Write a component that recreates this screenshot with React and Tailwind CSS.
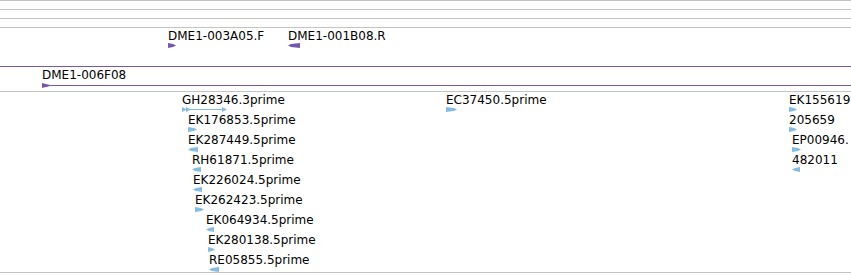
import React from "react";

const PURPLE = "#7558ad";
const BLUE = "#86bce2";

// small strand arrow glyph
function Glyph({ dir = "r", w = 9, h = 5, color }) {
  const pts =
    dir === "r"
      ? `0,0 ${w - 3},1 ${w},${h / 2} ${w - 3},${h - 1} 0,${h}`
      : `${w},0 3,1 0,${h / 2} 3,${h - 1} ${w},${h}`;
  return (
    <svg width={w} height={h} className="block">
      <polygon points={pts} fill={color} />
    </svg>
  );
}

// a feature sits at its genome coordinate within the row
function Feature({ x, label, dir, gw = 9, color = BLUE, children }) {
  return (
    <div className="absolute top-px flex flex-col" style={{ left: x }}>
      <span className="whitespace-nowrap text-[12px] leading-[14px] text-black">{label}</span>
      {children || <Glyph dir={dir} w={gw} color={color} />}
    </div>
  );
}

const estRows = [
  [
    { x: 182, label: "GH28346.3prime", spliced: true },
    { x: 446, label: "EC37450.5prime", dir: "r", gw: 11 },
    { x: 789, label: "EK155619", dir: "r", gw: 8 },
  ],
  [
    { x: 188, label: "EK176853.5prime", dir: "r", gw: 9 },
    { x: 789, label: "205659", dir: "r", gw: 8 },
  ],
  [
    { x: 188, label: "EK287449.5prime", dir: "l", gw: 10 },
    { x: 792, label: "EP00946.", dir: "r", gw: 9 },
  ],
  [
    { x: 192, label: "RH61871.5prime", dir: "l", gw: 9 },
    { x: 792, label: "482011", dir: "l", gw: 8 },
  ],
  [{ x: 193, label: "EK226024.5prime", dir: "l", gw: 9 }],
  [{ x: 195, label: "EK262423.5prime", dir: "r", gw: 9 }],
  [{ x: 206, label: "EK064934.5prime", dir: "l", gw: 8 }],
  [{ x: 208, label: "EK280138.5prime", dir: "r", gw: 7 }],
  [{ x: 209, label: "RE05855.5prime", dir: "l", gw: 10 }],
];

function Spliced() {
  return (
    <svg width="46" height="5" className="block">
      <polygon points="0,0 5,2.5 0,5" fill={BLUE} />
      <polygon points="4,0 9,2.5 4,5" fill={BLUE} />
      <rect x="8" y="2" width="36" height="1" fill={BLUE} />
      <polygon points="40,0 45,2.5 40,5" fill={BLUE} />
    </svg>
  );
}

export default function App() {
  return (
    <div
      className="flex h-[275px] w-[851px] flex-col overflow-hidden bg-white"
      style={{ fontFamily: '"DejaVu Sans", sans-serif' }}
    >
      {/* empty gray rows */}
      <div className="h-[9px] shrink-0 border-t border-[#c4c4c4]" />
      <div className="h-[9px] shrink-0 border-t border-[#c4c4c4]" />
      <div className="h-[9px] shrink-0 border-t border-[#c4c4c4]" />

      {/* clone ends track */}
      <div className="relative h-[39px] shrink-0 border-t border-[#c4c4c4]">
        <Feature x={168} label="DME1-003A05.F" dir="r" gw={8} color={PURPLE} />
        <Feature x={288} label="DME1-001B08.R" dir="l" gw={12} color={PURPLE} />
      </div>
      <div className="h-px shrink-0" style={{ background: PURPLE }} />
      <div className="relative h-[24px] shrink-0">
        <Feature x={42} label="DME1-006F08">
          <svg width="809" height="5" className="mt-[1px] block">
            <polygon points="0,0 6,1.5 9,2.5 6,3.5 0,5" fill={PURPLE} />
            <rect x="0" y="2" width="809" height="1" fill={PURPLE} />
          </svg>
        </Feature>
      </div>

      {/* EST track */}
      <div className="flex h-[182px] shrink-0 flex-col border-t border-b border-[#c4c4c4]">
        {estRows.map((row, i) => (
          <div key={i} className="relative h-[20px] shrink-0">
            {row.map((f) => (
              <Feature key={f.label} {...f}>
                {f.spliced ? <Spliced /> : null}
              </Feature>
            ))}
          </div>
        ))}
      </div>
    </div>
  );
}
